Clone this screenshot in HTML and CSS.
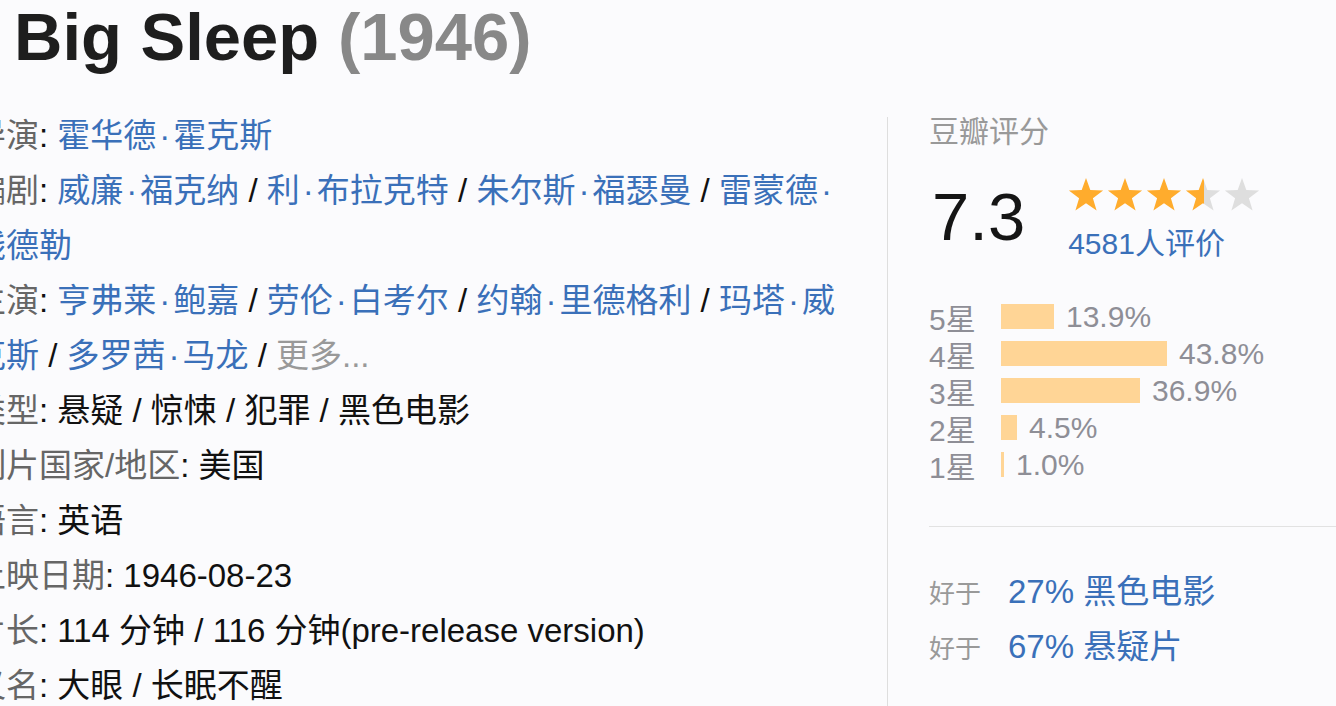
FILE: index.html
```html
<!DOCTYPE html>
<html lang="zh-CN">
<head>
<meta charset="utf-8"/>
<meta content="width=device-width, initial-scale=1.0" name="viewport"/>
<title>Big Sleep (1946)</title>
<link rel="stylesheet" href="styles.css">
</head>
<body>
<h1 class="title">Big Sleep <span class="year">(1946)</span></h1>
<div class="subject">
<div class="info">
<span class="pl">导演</span>: <span class="attrs"><a href="#">霍华德<span class="dot">·</span>霍克斯</a></span><br>
<span class="pl">编剧</span>: <span class="attrs"><a href="#">威廉<span class="dot">·</span>福克纳</a> / <a href="#">利<span class="dot">·</span>布拉克特</a> / <a href="#">朱尔斯<span class="dot">·</span>福瑟曼</a> / <a href="#">雷蒙德<span class="dot">·</span>钱德勒</a></span><br>
<span class="pl">主演</span>: <span class="attrs"><a href="#">亨弗莱<span class="dot">·</span>鲍嘉</a> / <a href="#">劳伦<span class="dot">·</span>白考尔</a> / <a href="#">约翰<span class="dot">·</span>里德格利</a> / <a href="#">玛塔<span class="dot">·</span>威克斯</a> / <a href="#">多罗茜<span class="dot">·</span>马龙</a> / <a class="more" href="#">更多...</a></span><br>
<span class="pl">类型</span>: <span class="v">悬疑</span> / <span class="v">惊悚</span> / <span class="v">犯罪</span> / <span class="v">黑色电影</span><br>
<span class="pl">制片国家/地区</span>: <span class="v">美国</span><br>
<span class="pl">语言</span>: <span class="v">英语</span><br>
<span class="pl">上映日期</span>: <span class="v">1946-08-23</span><br>
<span class="pl">片长</span>: <span class="v">114 分钟 / 116 分钟(pre-release version)</span><br>
<span class="pl">又名</span>: <span class="v">大眼 / 长眠不醒</span><br>
</div>
<div class="rating">
<div class="rating-title">豆瓣评分</div>
<div class="rating-main">
<strong class="rating-num">7.3</strong>
<div class="rating-side">
<svg class="stars" width="192" height="35" viewBox="0 0 192 35">
<defs>
<polygon id="star" points="18,1 22.3,13.1 35.1,13.4 24.9,21.3 28.6,33.6 18,26.3 7.4,33.6 11.1,21.3 0.9,13.4 13.7,13.1"/>
<linearGradient id="half" x1="0" x2="1" y1="0" y2="0">
<stop offset="54%" stop-color="#ffac2d"/>
<stop offset="54%" stop-color="#dedede"/>
</linearGradient>
</defs>
<use href="#star" x="0" fill="#ffac2d"/>
<use href="#star" x="39" fill="#ffac2d"/>
<use href="#star" x="78" fill="#ffac2d"/>
<use href="#star" x="117" fill="url(#half)"/>
<use href="#star" x="156" fill="#dedede"/>
</svg>
<a class="rating-people" href="#">4581人评价</a>
</div>
</div>
<div class="bars">
<div class="bar-row"><span class="star-label">5星</span><span class="bar" style="width:53px"></span><span class="per">13.9%</span></div>
<div class="bar-row"><span class="star-label">4星</span><span class="bar" style="width:166px"></span><span class="per">43.8%</span></div>
<div class="bar-row"><span class="star-label">3星</span><span class="bar" style="width:139px"></span><span class="per">36.9%</span></div>
<div class="bar-row"><span class="star-label">2星</span><span class="bar" style="width:16px"></span><span class="per">4.5%</span></div>
<div class="bar-row"><span class="star-label">1星</span><span class="bar" style="width:3px"></span><span class="per">1.0%</span></div>
</div>
<div class="betterthan">
<div><span class="gray">好于</span><a href="#">27% 黑色电影</a></div>
<div><span class="gray">好于</span><a href="#">67% 悬疑片</a></div>
</div>
</div>
</div>
</body>
</html>
```

FILE: styles.css
```css
body {
    margin: 0;
    background: #fbfbfd;
    font-family: "Liberation Sans", "Noto Sans CJK SC", sans-serif;
    color: #111;
    overflow: hidden;
}
a {
    color: #3a70b9;
    text-decoration: none;
}
.title {
    margin: 0 0 34px;
    padding-left: 14px;
    font-size: 67px;
    line-height: 74px;
    font-weight: bold;
    color: #1e1e1e;
}
.year {
    color: #888;
}
.subject {
    display: flex;
    align-items: flex-start;
}
.info {
    width: 877px;
    margin-left: -27px;
    flex-shrink: 0;
    font-size: 33px;
    line-height: 55px;
    color: #111;
}
.info .pl {
    color: #666;
}
.info .dot {
    padding: 0 3px;
}
.info a.more {
    color: #999;
}
.rating {
    flex: 1;
    margin: 9px 0 0 37px;
    padding-left: 41px;
    border-left: 1px solid #dedede;
    min-height: 700px;
}
.rating-title {
    font-size: 30px;
    line-height: 30px;
    color: #999;
}
.rating-main {
    display: flex;
    align-items: flex-start;
    margin-top: 30px;
}
.rating-num {
    font-size: 67px;
    line-height: 67px;
    font-weight: normal;
    color: #151515;
    padding-top: 6px;
    margin: 0 43px 0 3px;
}
.rating-side {
    display: flex;
    flex-direction: column;
}
.stars {
    display: block;
}
.rating-people {
    margin-top: 16px;
    font-size: 30px;
    line-height: 32px;
}
.bars {
    margin-top: 38px;
}
.bar-row {
    display: flex;
    align-items: center;
    height: 37px;
    font-size: 30px;
    color: #8e8e96;
}
.star-label {
    width: 72px;
}
.bar {
    height: 25px;
    background: #ffd596;
}
.per {
    margin-left: 12px;
}
.betterthan {
    margin-top: 43px;
    padding-top: 37px;
    border-top: 1px solid #e2e2e2;
    font-size: 33px;
    line-height: 55px;
}
.betterthan .gray {
    color: #999;
    font-size: 26px;
    line-height: 1;
    margin-right: 27px;
}
```
